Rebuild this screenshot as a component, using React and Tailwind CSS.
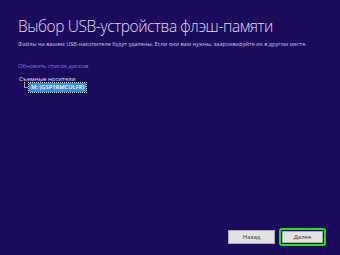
import React from "react";

const App = () => {
  return (
    <div className="flex flex-col h-[255px] w-[340px] bg-[#1c0b5c] font-['Open_Sans',sans-serif] overflow-hidden">
      <div className="pl-[18px] pt-[15px]">
        <h1 className="text-[15.5px] font-light text-[#e2def0] leading-[22px] tracking-[-0.4px]">
          Выбор USB-устройства флэш-памяти
        </h1>
        <p className="mt-[3px] text-[5.6px] leading-[8px] text-[#c9c3e0]">
          Файлы на вашем USB-накопителе будут удалены. Если они вам нужны, заархивируйте их в другом месте.
        </p>
        <div className="mt-[14px] text-[5.8px] leading-[8px] text-[#8c72e6]">
          Обновить список дисков
        </div>
        <div className="mt-[5px] text-[6px] leading-[8px] text-[#e6e4f0]">
          <div className="pl-[1px]">Съемные носители</div>
          <div className="flex items-center pl-[6px]">
            <div className="w-[4px] h-[6px] -mt-[5px] border-l border-b border-[#9a9ab0]" />
            <div className="ml-[1px] flex items-center bg-[#3a8ee0] text-white px-[2px] h-[9px] text-[5.8px] font-semibold whitespace-nowrap outline outline-1 outline-dotted outline-[#cfe4ff]">
              <span className="leading-none">M: (GSP1RMCULFR)</span>
            </div>
          </div>
        </div>
      </div>
      <div className="mt-auto flex justify-end items-center gap-[4px] pr-[14px] pb-[9px]">
        <button className="w-[47px] h-[14px] bg-[#e2e2e2] border border-[#adadad] text-[6px] leading-[12px] text-[#333]">
          Назад
        </button>
        <div className="rounded-[3px] border-[2px] border-[#22e022] p-[1px]">
          <button className="block w-[41px] h-[12px] bg-[#e2e2e2] border border-[#adadad] text-[6px] leading-[10px] text-[#333]">
            Далее
          </button>
        </div>
      </div>
    </div>
  );
};

export default App;
